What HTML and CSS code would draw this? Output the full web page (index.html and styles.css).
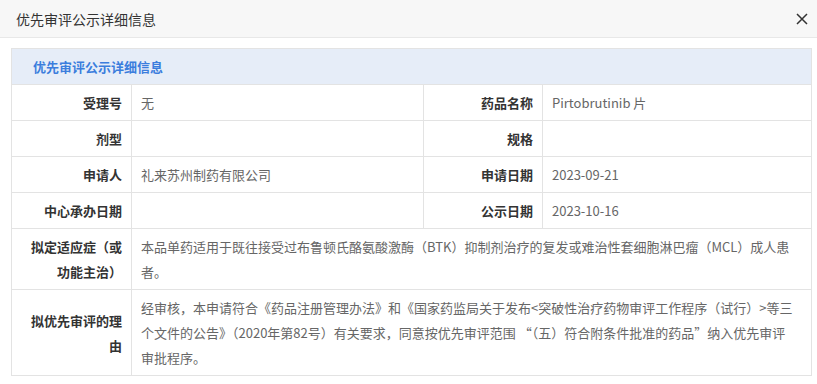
FILE: index.html
```html
<!DOCTYPE html>
<html lang="zh-CN">
<head>
<meta charset="utf-8">
<link rel="stylesheet" href="styles.css">
</head>
<body>
<div class="dialog">
  <div class="dlg-head">
    <span class="dlg-title">优先审评公示详细信息</span>
    <span class="dlg-close">
      <svg width="12" height="12" viewBox="0 0 12 12"><path d="M1 1L11 11M11 1L1 11" stroke="#333" stroke-width="1.5" fill="none"/></svg>
    </span>
  </div>
  <div class="dlg-body">
    <table class="info">
      <colgroup>
        <col class="c1"><col class="c2"><col class="c3"><col class="c4">
      </colgroup>
      <tr><th class="caption" colspan="4">优先审评公示详细信息</th></tr>
      <tr>
        <td class="lbl">受理号</td><td class="val">无</td>
        <td class="lbl">药品名称</td><td class="val">Pirtobrutinib 片</td>
      </tr>
      <tr>
        <td class="lbl">剂型</td><td class="val"></td>
        <td class="lbl">规格</td><td class="val"></td>
      </tr>
      <tr>
        <td class="lbl">申请人</td><td class="val">礼来苏州制药有限公司</td>
        <td class="lbl">申请日期</td><td class="val">2023-09-21</td>
      </tr>
      <tr>
        <td class="lbl">中心承办日期</td><td class="val"></td>
        <td class="lbl">公示日期</td><td class="val">2023-10-16</td>
      </tr>
      <tr>
        <td class="lbl">拟定适应症（或功能主治）</td>
        <td class="val" colspan="3">本品单药适用于既往接受过布鲁顿氏酪氨酸激酶（BTK）抑制剂治疗的复发或难治性套细胞淋巴瘤（MCL）成人患者。</td>
      </tr>
      <tr>
        <td class="lbl">拟优先审评的理由</td>
        <td class="val" colspan="3">经审核，本申请符合《药品注册管理办法》和《国家药监局关于发布&lt;突破性治疗药物审评工作程序（试行）&gt;等三个文件的公告》（2020年第82号）有关要求，同意按优先审评范围 “（五）符合附条件批准的药品”纳入优先审评<span class="keep">审批</span>程序。</td>
      </tr>
    </table>
  </div>
</div>
</body>
</html>
```
FILE: styles.css
```css
html, body {
  margin: 0;
  padding: 0;
  background: #fff;
  font-family: "Noto Sans CJK SC", "Noto Sans", sans-serif;
}
.dialog {
  width: 817px;
}
.dlg-head {
  height: 37px;
  background: #f7f7f7;
  border-bottom: 1px solid #e8e8e8;
  display: flex;
  align-items: center;
  justify-content: space-between;
  padding: 0 9px 0 16px;
  box-sizing: content-box;
}
.dlg-title {
  font-size: 14px;
  color: #333;
}
.dlg-close {
  display: flex;
  width: 12px;
  height: 12px;
}
.dlg-body {
  padding: 10px 0 0 11px;
}
.info {
  width: 800px;
  border-collapse: collapse;
  table-layout: fixed;
  font-size: 13px;
  line-height: 25px;
}
.c1 { width: 120px; }
.c2 { width: 292px; }
.c3 { width: 119px; }
.c4 { width: 269px; }
.info th, .info td {
  border: 1px solid #e3e3e3;
  padding: 5px 9px;
}
.info .caption {
  background: #e6edf8;
  color: #3b7ddd;
  font-weight: bold;
  text-align: left;
  padding: 5px 21px;
}
.info .lbl {
  text-align: right;
  font-weight: bold;
  color: #333;
  vertical-align: middle;
}
.info .val {
  text-align: left;
  color: #666;
  vertical-align: top;
}
.keep {
  white-space: nowrap;
}
```
